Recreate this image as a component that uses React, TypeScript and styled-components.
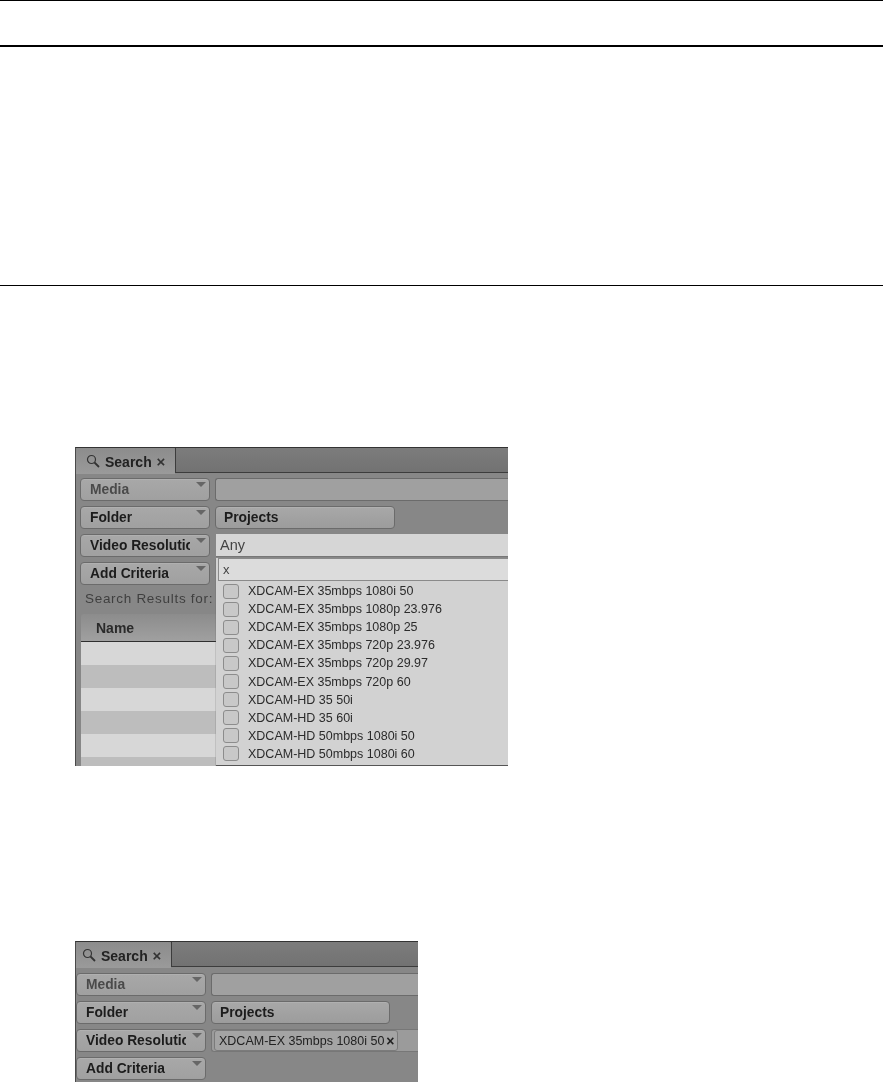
import styled, { createGlobalStyle } from 'styled-components';

const GlobalStyle = createGlobalStyle`
	html, body {
		margin: 0;
		padding: 0;
		background: #fff;
	}
	body {
		font-family: 'Liberation Sans', Arial, sans-serif;
	}
`;

const Page = styled.div`
	width: 883px;
	height: 1082px;
	overflow: hidden;
	background: #fff;
`;

const Rule = styled.div<{ $thick?: boolean; $gap: number }>`
	height: ${(p) => (p.$thick ? 2 : 1)}px;
	margin-top: ${(p) => p.$gap}px;
	background: #000;
`;

const Panel = styled.div<{ $width: number; $height: number; $gap: number }>`
	position: relative;
	width: ${(p) => p.$width}px;
	height: ${(p) => p.$height}px;
	margin: ${(p) => p.$gap}px 0 0 75px;
	overflow: hidden;
	background: #878787;
	border-top: 1px solid #333;
	border-left: 1px solid #4a4a4a;
	box-sizing: border-box;
	filter: blur(0.35px);
`;

const TabBar = styled.div`
	display: flex;
	height: 26px;
`;

const Tab = styled.div<{ $width: number; $inset: number }>`
	display: flex;
	align-items: center;
	gap: 5px;
	width: ${(p) => p.$width}px;
	padding-left: ${(p) => p.$inset}px;
	box-sizing: border-box;
	border-radius: 3px 3px 0 0;
	background: linear-gradient(#8c8c8c, #9a9a9a);
	font-size: 14px;
	font-weight: 700;
	color: #222;
`;

const TabClose = styled.span`
	margin-left: 1px;
	font-size: 15px;
	color: #333;
`;

const TabFill = styled.div`
	flex: 1;
	margin-bottom: 1px;
	background: linear-gradient(#7c7c7c, #727272);
	border-left: 1px solid #3c3c3c;
	border-bottom: 1px solid #3c3c3c;
`;

const Rows = styled.div<{ $inset: number; $top: number }>`
	display: grid;
	grid-template-columns: 130px 1fr;
	grid-auto-rows: 23px;
	row-gap: 5px;
	column-gap: 5px;
	padding: ${(p) => p.$top}px 0 0 ${(p) => p.$inset}px;
`;

const Criteria = styled.div<{ $dim?: boolean }>`
	position: relative;
	display: flex;
	align-items: center;
	padding-left: 9px;
	border: 1px solid #6b6b6b;
	border-radius: 4px;
	box-sizing: border-box;
	background: linear-gradient(#a8a8a8, #a0a0a0);
	box-shadow: inset 0 1px 0 #b0b0b0;
	font-size: 13.8px;
	font-weight: 700;
	white-space: nowrap;
	overflow: hidden;
	color: ${(p) => (p.$dim ? '#4a4a4a' : '#1c1c1c')};
	&::after {
		content: '';
		position: absolute;
		top: 3px;
		right: 3px;
		border-left: 5px solid transparent;
		border-right: 5px solid transparent;
		border-top: 5px solid #666;
	}
`;

const CriteriaText = styled.span`
	display: block;
	width: 100px;
	overflow: hidden;
`;

const EmptyField = styled.div`
	border: 1px solid #6b6b6b;
	border-right: 0;
	border-radius: 3px 0 0 3px;
	background: #a0a0a0;
`;

const FolderButton = styled.div<{ $width: number }>`
	display: flex;
	align-items: center;
	width: ${(p) => p.$width}px;
	padding-left: 8px;
	box-sizing: border-box;
	border: 1px solid #6b6b6b;
	border-radius: 4px;
	background: linear-gradient(#a8a8a8, #9c9c9c);
	box-shadow: inset 0 1px 0 #b0b0b0;
	font-size: 13.8px;
	font-weight: 700;
	color: #1c1c1c;
`;

const SelectField = styled.div`
	display: flex;
	align-items: center;
	margin-left: 1px;
	padding-left: 4px;
	background: #d6d6d6;
	border-bottom: 1px solid #777;
	font-size: 14.5px;
	color: #444;
`;

const Chips = styled.div`
	display: flex;
	align-items: center;
	padding-left: 2px;
	border: 1px solid #777;
	border-right: 0;
	border-radius: 3px 0 0 3px;
	background: #9b9b9b;
`;

const Chip = styled.div`
	display: flex;
	align-items: center;
	gap: 2px;
	height: 19px;
	padding: 0 2px 0 4px;
	border: 1px solid #7b7b7b;
	border-radius: 3px;
	background: #a4a4a4;
	font-size: 12.5px;
	color: #222;
	white-space: nowrap;
`;

const ChipClose = styled.span`
	font-size: 14px;
	font-weight: 700;
	color: #222;
`;

const ResultsLabel = styled.div`
	margin: 3px 0 0 9px;
	height: 22px;
	line-height: 22px;
	font-size: 13.5px;
	letter-spacing: 0.7px;
	color: #3f3f3f;
	white-space: nowrap;
`;

const TableHead = styled.div`
	display: flex;
	align-items: center;
	margin: 4px 0 0 5px;
	height: 27px;
	padding-left: 15px;
	border-radius: 3px 3px 0 0;
	border-bottom: 1px solid #2e2e2e;
	background: linear-gradient(#8c8c8c, #a0a0a0);
	font-size: 14px;
	font-weight: 700;
	color: #2a2a2a;
`;

const TableRow = styled.div<{ $dark: boolean }>`
	height: 23px;
	margin-left: 5px;
	background: ${(p) => (p.$dark ? '#bdbdbd' : '#d7d7d7')};
`;

const Dropdown = styled.div`
	position: absolute;
	left: 140px;
	top: 110px;
	right: 0;
	bottom: 1px;
	background: #d2d2d2;
	box-shadow: 0 1px 1px #555;
`;

const FilterInput = styled.div`
	display: flex;
	align-items: center;
	height: 23px;
	margin-left: 2px;
	padding-left: 4px;
	background: #dcdcdc;
	border: 1px solid #8a8a8a;
	border-right: 0;
	box-sizing: border-box;
	font-size: 13px;
	color: #444;
`;

const Options = styled.div`
	display: flex;
	flex-direction: column;
	padding: 1px 0 0 7px;
`;

const Option = styled.div`
	display: flex;
	align-items: center;
	gap: 9px;
	height: 18.1px;
	font-size: 12.5px;
	color: #2b2b2b;
	white-space: nowrap;
`;

const Box = styled.span`
	flex: none;
	width: 14px;
	height: 13px;
	border: 1px solid #8c8c8c;
	border-radius: 3px;
	background: #c8c8c8;
`;

const SearchIcon = () => (
	<svg width="14" height="14" viewBox="0 0 14 14" fill="none" stroke="#333" strokeWidth="1.2">
		<circle cx="5.5" cy="5.5" r="4" />
		<path d="M8.5 8.5 L13 13" strokeWidth="1.8" />
	</svg>
);

const options = [
	'XDCAM-EX 35mbps 1080i 50',
	'XDCAM-EX 35mbps 1080p 23.976',
	'XDCAM-EX 35mbps 1080p 25',
	'XDCAM-EX 35mbps 720p 23.976',
	'XDCAM-EX 35mbps 720p 29.97',
	'XDCAM-EX 35mbps 720p 60',
	'XDCAM-HD 35 50i',
	'XDCAM-HD 35 60i',
	'XDCAM-HD 50mbps 1080i 50',
	'XDCAM-HD 50mbps 1080i 60',
];

const SearchTab = ({ width, inset }: { width: number; inset: number }) => (
	<TabBar>
		<Tab $width={width} $inset={inset}>
			<SearchIcon />
			<span>
				Search <TabClose>×</TabClose>
			</span>
		</Tab>
		<TabFill />
	</TabBar>
);

const App = () => {
	return (
		<Page>
			<GlobalStyle />
			<Rule $gap={0} />
			<Rule $gap={44} $thick />
			<Rule $gap={238} />
			<Panel $width={433} $height={319} $gap={161}>
				<SearchTab width={99} inset={10} />
				<Rows $inset={4} $top={4}>
					<Criteria $dim>
						<CriteriaText>Media</CriteriaText>
					</Criteria>
					<EmptyField />
					<Criteria>
						<CriteriaText>Folder</CriteriaText>
					</Criteria>
					<FolderButton $width={180}>Projects</FolderButton>
					<Criteria>
						<CriteriaText>Video Resolution</CriteriaText>
					</Criteria>
					<SelectField>Any</SelectField>
					<Criteria>
						<CriteriaText>Add Criteria</CriteriaText>
					</Criteria>
				</Rows>
				<ResultsLabel>Search Results for:</ResultsLabel>
				<TableHead>Name</TableHead>
				{[0, 1, 2, 3, 4, 5].map((i) => (
					<TableRow key={i} $dark={i % 2 === 1} />
				))}
				<Dropdown>
					<FilterInput>x</FilterInput>
					<Options>
						{options.map((o) => (
							<Option key={o}>
								<Box />
								{o}
							</Option>
						))}
					</Options>
				</Dropdown>
			</Panel>
			<Panel $width={343} $height={141} $gap={175}>
				<SearchTab width={95} inset={6} />
				<Rows $inset={0} $top={5}>
					<Criteria $dim>
						<CriteriaText>Media</CriteriaText>
					</Criteria>
					<EmptyField />
					<Criteria>
						<CriteriaText>Folder</CriteriaText>
					</Criteria>
					<FolderButton $width={179}>Projects</FolderButton>
					<Criteria>
						<CriteriaText>Video Resolution</CriteriaText>
					</Criteria>
					<Chips>
						<Chip>
							XDCAM-EX 35mbps 1080i 50
							<ChipClose>×</ChipClose>
						</Chip>
					</Chips>
					<Criteria>
						<CriteriaText>Add Criteria</CriteriaText>
					</Criteria>
				</Rows>
			</Panel>
		</Page>
	);
};

export default App;
